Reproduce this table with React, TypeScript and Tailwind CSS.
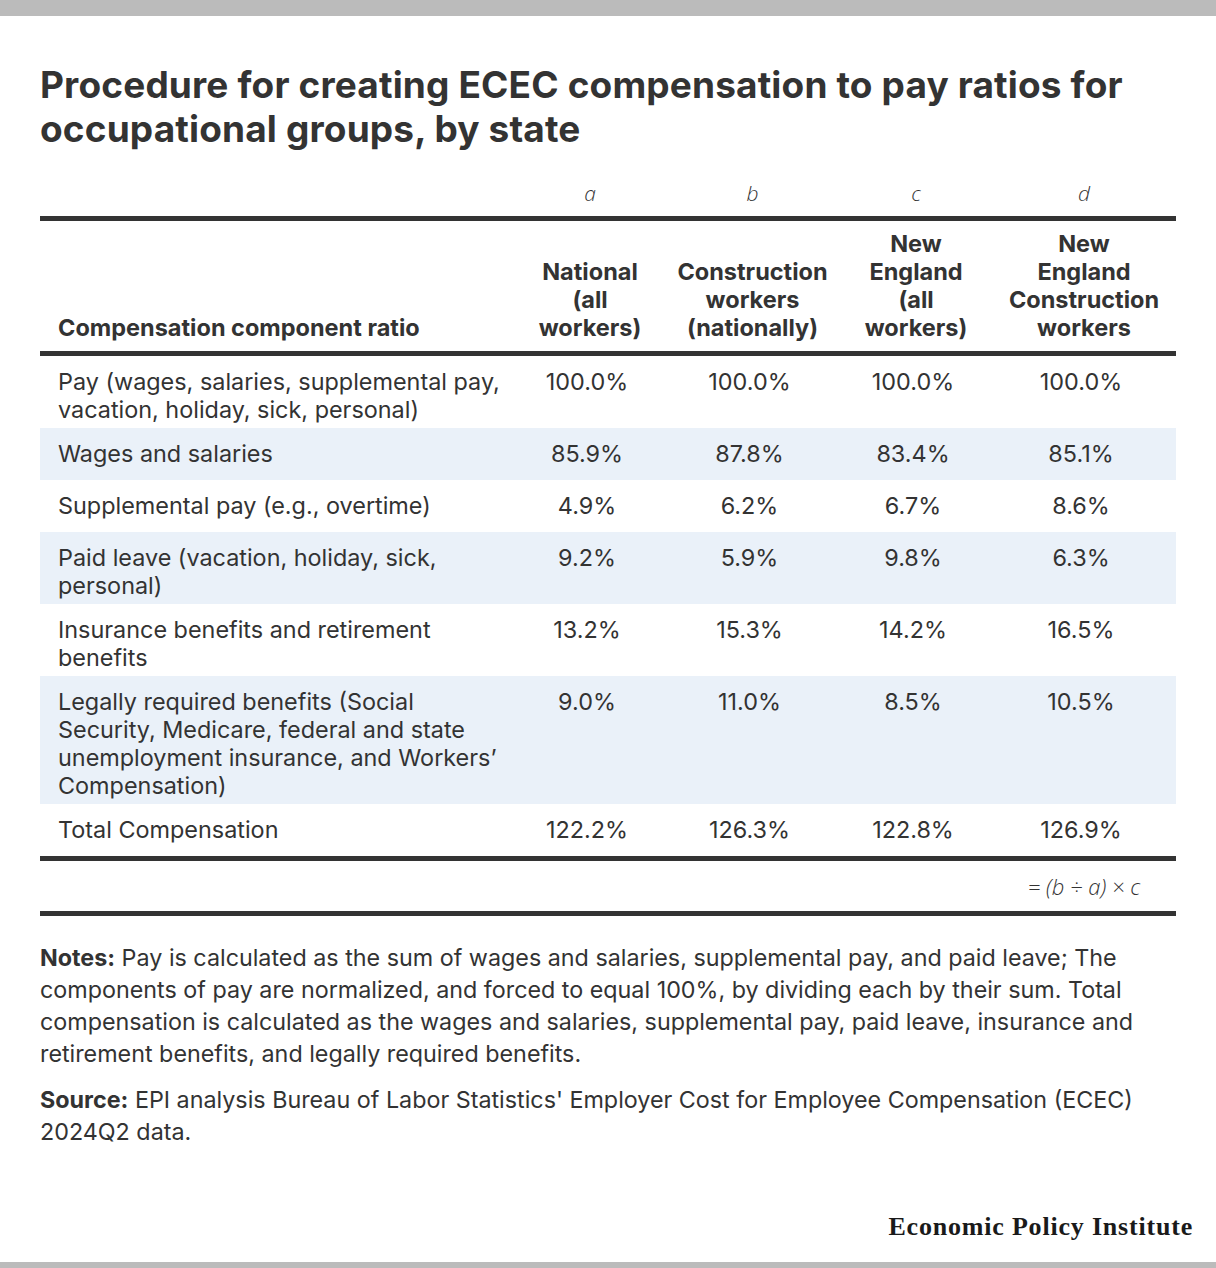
import React from "react";

const rows: { label: React.ReactNode; vals: string[]; band: boolean }[] = [
  {
    label: (
      <>
        Pay (wages, salaries, supplemental pay,
        <br />
        vacation, holiday, sick, personal)
      </>
    ),
    vals: ["100.0%", "100.0%", "100.0%", "100.0%"],
    band: false,
  },
  { label: <>Wages and salaries</>, vals: ["85.9%", "87.8%", "83.4%", "85.1%"], band: true },
  { label: <>Supplemental pay (e.g., overtime)</>, vals: ["4.9%", "6.2%", "6.7%", "8.6%"], band: false },
  {
    label: (
      <>
        Paid leave (vacation, holiday, sick,
        <br />
        personal)
      </>
    ),
    vals: ["9.2%", "5.9%", "9.8%", "6.3%"],
    band: true,
  },
  {
    label: (
      <>
        Insurance benefits and retirement
        <br />
        benefits
      </>
    ),
    vals: ["13.2%", "15.3%", "14.2%", "16.5%"],
    band: false,
  },
  {
    label: (
      <>
        Legally required benefits (Social
        <br />
        Security, Medicare, federal and state
        <br />
        unemployment insurance, and Workers’
        <br />
        Compensation)
      </>
    ),
    vals: ["9.0%", "11.0%", "8.5%", "10.5%"],
    band: true,
  },
  { label: <>Total Compensation</>, vals: ["122.2%", "126.3%", "122.8%", "126.9%"], band: false },
];

const grid = "grid grid-cols-[475px_150px_175px_152px_184px]";
const italicFont = { fontFamily: "'Open Sans', 'Noto Sans', Inter, sans-serif" };

export default function App() {
  return (
    <div
      className="w-[1216px] h-[1268px] bg-white flex flex-col text-[#333333]"
      style={{ fontFamily: "Inter, 'Open Sans', sans-serif" }}
    >
      <div className="h-[16px] bg-[#bbbbbb] shrink-0" />
      <div className="px-[40px]">
        <h1 className="mt-[47px] text-[37px] leading-[44px] font-bold text-[#333333] tracking-[0.15px]">
          Procedure for creating ECEC compensation to pay ratios for
          <br />
          occupational groups, by state
        </h1>

        <div className="w-[1136px]">
          {/* letters row */}
          <div
            className={`${grid} h-[65px] items-end pb-[9px] text-[21px] leading-[28px] italic font-light`}
            style={italicFont}
          >
            <div />
            <div className="text-center">a</div>
            <div className="text-center">b</div>
            <div className="text-center">c</div>
            <div className="text-center">d</div>
          </div>
          <div className="h-[5px] bg-[#333333]" />
          {/* header */}
          <div className={`${grid} h-[130px] items-end pb-[9px] text-[23.5px] leading-[28px] font-bold`}>
            <div className="pl-[18px]">Compensation component ratio</div>
            <div className="text-center">
              National
              <br />
              (all
              <br />
              workers)
            </div>
            <div className="text-center">
              Construction
              <br />
              workers
              <br />
              (nationally)
            </div>
            <div className="text-center">
              New
              <br />
              England
              <br />
              (all
              <br />
              workers)
            </div>
            <div className="text-center">
              New
              <br />
              England
              <br />
              Construction
              <br />
              workers
            </div>
          </div>
          <div className="h-[5px] bg-[#333333]" />
          {/* body */}
          {rows.map((r, i) => (
            <div
              key={i}
              className={`${grid} items-start text-[23.4px] leading-[28px] ${r.band ? "bg-[#eaf1f9]" : ""}`}
            >
              <div className="pl-[18px] pt-[12px] pb-[4px] whitespace-nowrap">{r.label}</div>
              {r.vals.map((v, j) => (
                <div key={j} className="py-[12px] text-center pr-[6px]">
                  {v}
                </div>
              ))}
            </div>
          ))}
          <div className="h-[5px] bg-[#333333]" />
          <div className={`${grid} h-[50px] items-center text-[22px] italic font-light`} style={italicFont}>
            <div />
            <div />
            <div />
            <div />
            <div className="text-center">= (b ÷ a) × c</div>
          </div>
          <div className="h-[5px] bg-[#333333]" />
        </div>

        <p className="mt-[26px] text-[23.3px] leading-[32px] whitespace-nowrap">
          <span className="font-bold">Notes:</span> Pay is calculated as the sum of wages and salaries, supplemental
          pay, and paid leave; The
          <br />
          components of pay are normalized, and forced to equal 100%, by dividing each by their sum. Total
          <br />
          compensation is calculated as the wages and salaries, supplemental pay, paid leave, insurance and
          <br />
          retirement benefits, and legally required benefits.
        </p>
        <p className="mt-[14px] text-[23.3px] leading-[32px] whitespace-nowrap">
          <span className="font-bold">Source:</span> EPI analysis Bureau of Labor Statistics' Employer Cost for
          Employee Compensation (ECEC)
          <br />
          2024Q2 data.
        </p>
      </div>

      <div className="mt-auto flex justify-end pr-[23px] pb-[19px]">
        <div
          className="text-[26px] leading-[32px] font-bold text-[#1a1a1a] tracking-[0.8px]"
          style={{ fontFamily: "'Liberation Serif', 'DejaVu Serif', serif" }}
        >
          Economic Policy Institute
        </div>
      </div>
      <div className="h-[6px] bg-[#bbbbbb] shrink-0" />
    </div>
  );
}
